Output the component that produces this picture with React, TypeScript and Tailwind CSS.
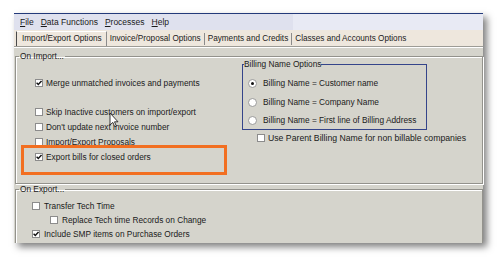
import React from "react";

const Check = ({ checked }: { checked?: boolean }) => (
  <span className="w-[8px] h-[8px] border border-[#8c8c8c] bg-white flex items-center justify-center shrink-0">
    {checked && (
      <svg width="6" height="6" viewBox="0 0 6 6">
        <path d="M0.6 2.7 L2.3 4.5 L5.5 0.9" stroke="#111" strokeWidth="1.4" fill="none" />
      </svg>
    )}
  </span>
);

const Radio = ({ on }: { on?: boolean }) => (
  <span className="w-[9px] h-[9px] rounded-full border border-[#9a9a9a] bg-white flex items-center justify-center shrink-0">
    {on && <span className="w-[3px] h-[3px] rounded-full bg-[#111]" />}
  </span>
);

const Row = ({ checked, label, cls }: { checked?: boolean; label: string; cls: string }) => (
  <div className={`h-[15px] flex items-center gap-[3px] ${cls}`}>
    <Check checked={checked} />
    <span>{label}</span>
  </div>
);

export default function App() {
  return (
    <div
      className="w-[500px] h-[257px] bg-white pt-[13px] pl-[14px] text-[8.3px] leading-[10px] text-[#1a1a1a] relative overflow-hidden"
      style={{ fontFamily: '"Liberation Sans", Arial, sans-serif' }}
    >
      <div className="w-[469px] h-[230px] flex flex-col bg-[#d5d4cc] border-t border-[#233a7a] shadow-[4px_4px_7px_rgba(0,0,0,0.5)]">
        {/* menu bar */}
        <div className="h-[16px] flex shrink-0">
          <div className="w-[279px] bg-[#dfe1ee] flex items-center pl-[6px] gap-[7px] text-[8.5px]">
            <span><u>F</u>ile</span>
            <span><u>D</u>ata Functions</span>
            <span><u>P</u>rocesses</span>
            <span><u>H</u>elp</span>
          </div>
          <div className="flex-1 bg-[#e8eaf4]" />
        </div>
        {/* tabs */}
        <div className="h-[17px] shrink-0 flex items-end bg-[#eee7dd] border-b border-[#9d9c96] text-[8.2px]">
          <div className="ml-[2px] h-[15px] pl-[5px] pr-[4px] flex items-center border-l border-[#4a4a4a] border-t border-t-white border-r border-r-[#8b8b8b]">
            Import/Export Options
          </div>
          <div className="h-[15px] flex items-center">
            <span className="px-[3px]">Invoice/Proposal Options</span>
            <span className="w-px h-[12px] bg-[#8b8b8b]" />
            <span className="px-[3px]">Payments and Credits</span>
            <span className="w-px h-[12px] bg-[#8b8b8b]" />
            <span className="px-[3px]">Classes and Accounts Options</span>
          </div>
        </div>
        {/* content */}
        <div className="flex-1 flex flex-col pt-[4px] pl-[1px] border-t border-white">
          <fieldset className="h-[132px] border border-[#93928c] shadow-[inset_1px_1px_0_#fff,1px_1px_0_#fff] shrink-0">
            <legend className="ml-[3px] px-[1px] leading-[8px]">On Import...</legend>
            <div className="flex">
              <div className="w-[226px] pt-[15px] flex flex-col relative">
                <Row checked label="Merge unmatched invoices and payments" cls="pl-[19px]" />
                <Row label="Skip Inactive customers on import/export" cls="pl-[19px] mt-[14px]" />
                <Row label="Don't update next invoice number" cls="pl-[19px]" />
                <Row label="Import/Export Proposals" cls="pl-[19px]" />
                <Row checked label="Export bills for closed orders" cls="pl-[19px]" />
                <div className="absolute left-[5px] top-[85px] w-[206px] h-[30px] border-[3px] border-[#f26f21]" />
              </div>
              <div className="flex flex-col">
                <fieldset className="w-[185px] h-[70px] border border-[#34448a]">
                  <legend className="ml-[1px] leading-[8px]">Billing Name Options</legend>
                  <div className="pt-[6px] pl-[5px] flex flex-col">
                    <div className="h-[18px] flex items-center gap-[6px]">
                      <Radio on />
                      <span>Billing Name = Customer name</span>
                    </div>
                    <div className="h-[18px] mt-[1px] flex items-center gap-[6px]">
                      <Radio />
                      <span>Billing Name = Company Name</span>
                    </div>
                    <div className="h-[18px] flex items-center gap-[6px]">
                      <Radio />
                      <span>Billing Name = First line of Billing Address</span>
                    </div>
                  </div>
                </fieldset>
                <div className="h-[14px] mt-[1px] pl-[15px] flex items-center gap-[3px] text-[8.7px]">
                  <Check />
                  <span>Use Parent Billing Name for non billable companies</span>
                </div>
              </div>
            </div>
          </fieldset>
          <fieldset className="mt-[1px] flex-1 border border-b-0 border-[#93928c] shadow-[inset_1px_1px_0_#fff]">
            <legend className="ml-[3px] px-[1px] leading-[8px]">On Export...</legend>
            <div className="pt-[6px] flex flex-col">
              <div className="h-[14px] pl-[16px] flex items-center gap-[4px]">
                <Check />
                <span>Transfer Tech Time</span>
              </div>
              <div className="h-[14px] pl-[34px] flex items-center gap-[4px]">
                <Check />
                <span>Replace Tech time Records on Change</span>
              </div>
              <div className="h-[14px] pl-[16px] flex items-center gap-[4px]">
                <Check checked />
                <span>Include SMP items on Purchase Orders</span>
              </div>
            </div>
          </fieldset>
        </div>
      </div>
      {/* mouse pointer */}
      <svg className="absolute left-[109px] top-[112px]" width="10" height="16" viewBox="0 0 10 16">
        <path d="M1 1 L1 13 L3.8 10.4 L5.8 14.8 L7.4 14.1 L5.5 9.8 L9 9.8 Z" fill="#fff" stroke="#222" strokeWidth="0.9" strokeLinejoin="round" />
      </svg>
    </div>
  );
}
